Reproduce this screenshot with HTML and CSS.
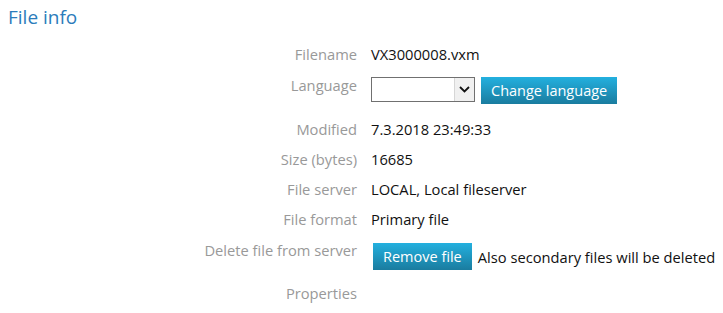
FILE: index.html
```html
<!DOCTYPE html>
<html lang="en">
<head>
    <meta charset="UTF-8">
    <meta name="viewport" content="width=device-width, initial-scale=1.0">
    <title>File info</title>
    <link rel="stylesheet" href="styles.css">
</head>
<body>
    <div class="page">
        <h1>File info</h1>
        <div class="info-grid">
            <div class="label">Filename</div>
            <div class="value">VX3000008.vxm</div>

            <div class="label label-ctrl">Language</div>
            <div class="value value-lang">
                <div class="select-box">
                    <select id="language" name="language">
                        <option value=""></option>
                    </select>
                    <span class="select-arrow">
                        <svg width="11" height="7" viewBox="0 0 11 7"><path d="M1 1 L5.5 5.5 L10 1" fill="none" stroke="#111" stroke-width="1.8"/></svg>
                    </span>
                </div>
                <button class="btn">Change language</button>
            </div>

            <div class="label">Modified</div>
            <div class="value">7.3.2018 23:49:33</div>

            <div class="label">Size (bytes)</div>
            <div class="value">16685</div>

            <div class="label">File server</div>
            <div class="value">LOCAL, Local fileserver</div>

            <div class="label">File format</div>
            <div class="value">Primary file</div>

            <div class="label label-ctrl">Delete file from server</div>
            <div class="value value-del">
                <button class="btn">Remove file</button>
                <span class="note">Also secondary files will be deleted</span>
            </div>

            <div class="label">Properties</div>
            <div class="value"></div>
        </div>
    </div>
</body>
</html>
```

FILE: styles.css
```css
body {
    margin: 0;
    font-family: "Segoe UI", "Open Sans", sans-serif;
    font-size: 14.7px;
    color: #111;
    background: #fff;
}
.page {
    padding: 4px 0 4px 8px;
}
h1 {
    margin: 0;
    font-size: 19px;
    font-weight: normal;
    color: #2b7cbb;
    line-height: 26px;
}
.info-grid {
    display: grid;
    grid-template-columns: 349px 1fr;
    column-gap: 14px;
    margin-top: 9px;
}
.label, .value {
    line-height: 22px;
    padding: 4px 0;
    white-space: nowrap;
}
.label {
    text-align: right;
    color: #999;
}
.label-ctrl {
    padding-top: 5px;
}
.value-lang {
    display: flex;
    align-items: flex-start;
    gap: 6px;
    padding: 8px 0 10px;
}
.value-del {
    display: flex;
    align-items: center;
    gap: 6px;
    padding: 9px 0 8px 2px;
}
.note {
    white-space: nowrap;
}
.select-box {
    display: flex;
    width: 102px;
    height: 23px;
    border: 1px solid #707070;
    background: #fff;
}
.select-box select {
    flex: 1;
    min-width: 0;
    border: none;
    outline: none;
    appearance: none;
    -webkit-appearance: none;
    background: #fff;
    font-family: inherit;
    font-size: 14px;
}
.select-arrow {
    width: 19px;
    display: flex;
    align-items: center;
    justify-content: center;
    background: #f0f0f0;
    border-left: 1px solid #d6d6d6;
}
.btn {
    flex: none;
    height: 27px;
    padding: 0 10px;
    border: none;
    color: #fff;
    font-family: inherit;
    font-size: 14.5px;
    white-space: nowrap;
    background: linear-gradient(#23b0df, #1a7c9f);
    cursor: pointer;
}
.btn:hover {
    background: linear-gradient(#1f9ecb, #176f8f);
}
```
